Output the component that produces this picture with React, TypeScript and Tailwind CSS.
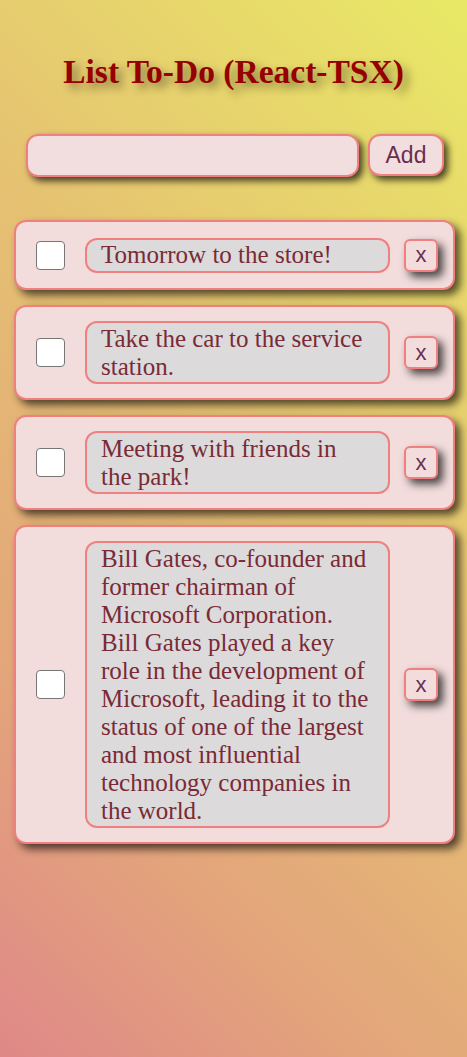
import React from "react";

const items = [
  "Tomorrow to the store!",
  "Take the car to the service station.",
  "Meeting with friends in the park!",
  "Bill Gates, co-founder and former chairman of Microsoft Corporation. Bill Gates played a key role in the development of Microsoft, leading it to the status of one of the largest and most influential technology companies in the world.",
];

export default function App() {
  return (
    <div className="min-h-screen w-full bg-[linear-gradient(45deg,#df8888_0%,#e3a57b_25%,#e6c870_65%,#e9e966_100%)] font-['Liberation_Serif',serif]">
      <h1 className="pt-[53px] text-center text-[33.5px] leading-[38px] font-bold text-[#960000] [text-shadow:5px_5px_10px_rgba(0,0,0,0.45)]">
        List To-Do (React-TSX)
      </h1>
      <div className="mt-[43px] flex pl-[26px] pr-[23px] gap-[9px]">
        <input
          type="text"
          className="h-[43px] flex-1 min-w-0 rounded-[12px] border-2 border-[#f08080] bg-[#f2dede] shadow-[4px_4px_7px_rgba(0,0,0,0.7)] outline-none px-3 text-[22px] text-[#722f37]"
        />
        <button className="h-[42px] w-[76px] rounded-[12px] border-2 border-[#f08080] bg-[#f2dede] shadow-[4px_4px_7px_rgba(0,0,0,0.7)] font-['Liberation_Sans',sans-serif] text-[23px] text-[#6b2d4f]">
          Add
        </button>
      </div>
      <div className="mt-[43px] flex flex-col gap-[15px] pl-[14px] pr-[12px] pb-8">
        {items.map((t, i) => (
          <div
            key={i}
            className="flex items-center min-h-[70px] rounded-[12px] border-2 border-[#f08080] bg-[#f2dcdc] shadow-[5px_5px_8px_rgba(0,0,0,0.65)] pl-[20px] pr-[15px] py-[14px]"
          >
            <input
              type="checkbox"
              className="appearance-none shrink-0 w-[29px] h-[29px] bg-white border border-[#767676] rounded-[4px]"
            />
            <div className="ml-[20px] flex-1 rounded-[12px] border-2 border-[#f08080] bg-[#dcdadb] pl-[14px] pr-[17px] py-[1.5px] text-[25px] leading-[28px] text-[#7a2a35]">
              {t}
            </div>
            <button className="ml-[14px] shrink-0 w-[34px] h-[33px] rounded-[6px] border-2 border-[#f08080] bg-[#f2dcdc] shadow-[5px_5px_8px_rgba(0,0,0,0.7)] font-['Liberation_Sans',sans-serif] text-[22px] leading-none text-[#6b2d4f]">
              x
            </button>
          </div>
        ))}
      </div>
    </div>
  );
}
